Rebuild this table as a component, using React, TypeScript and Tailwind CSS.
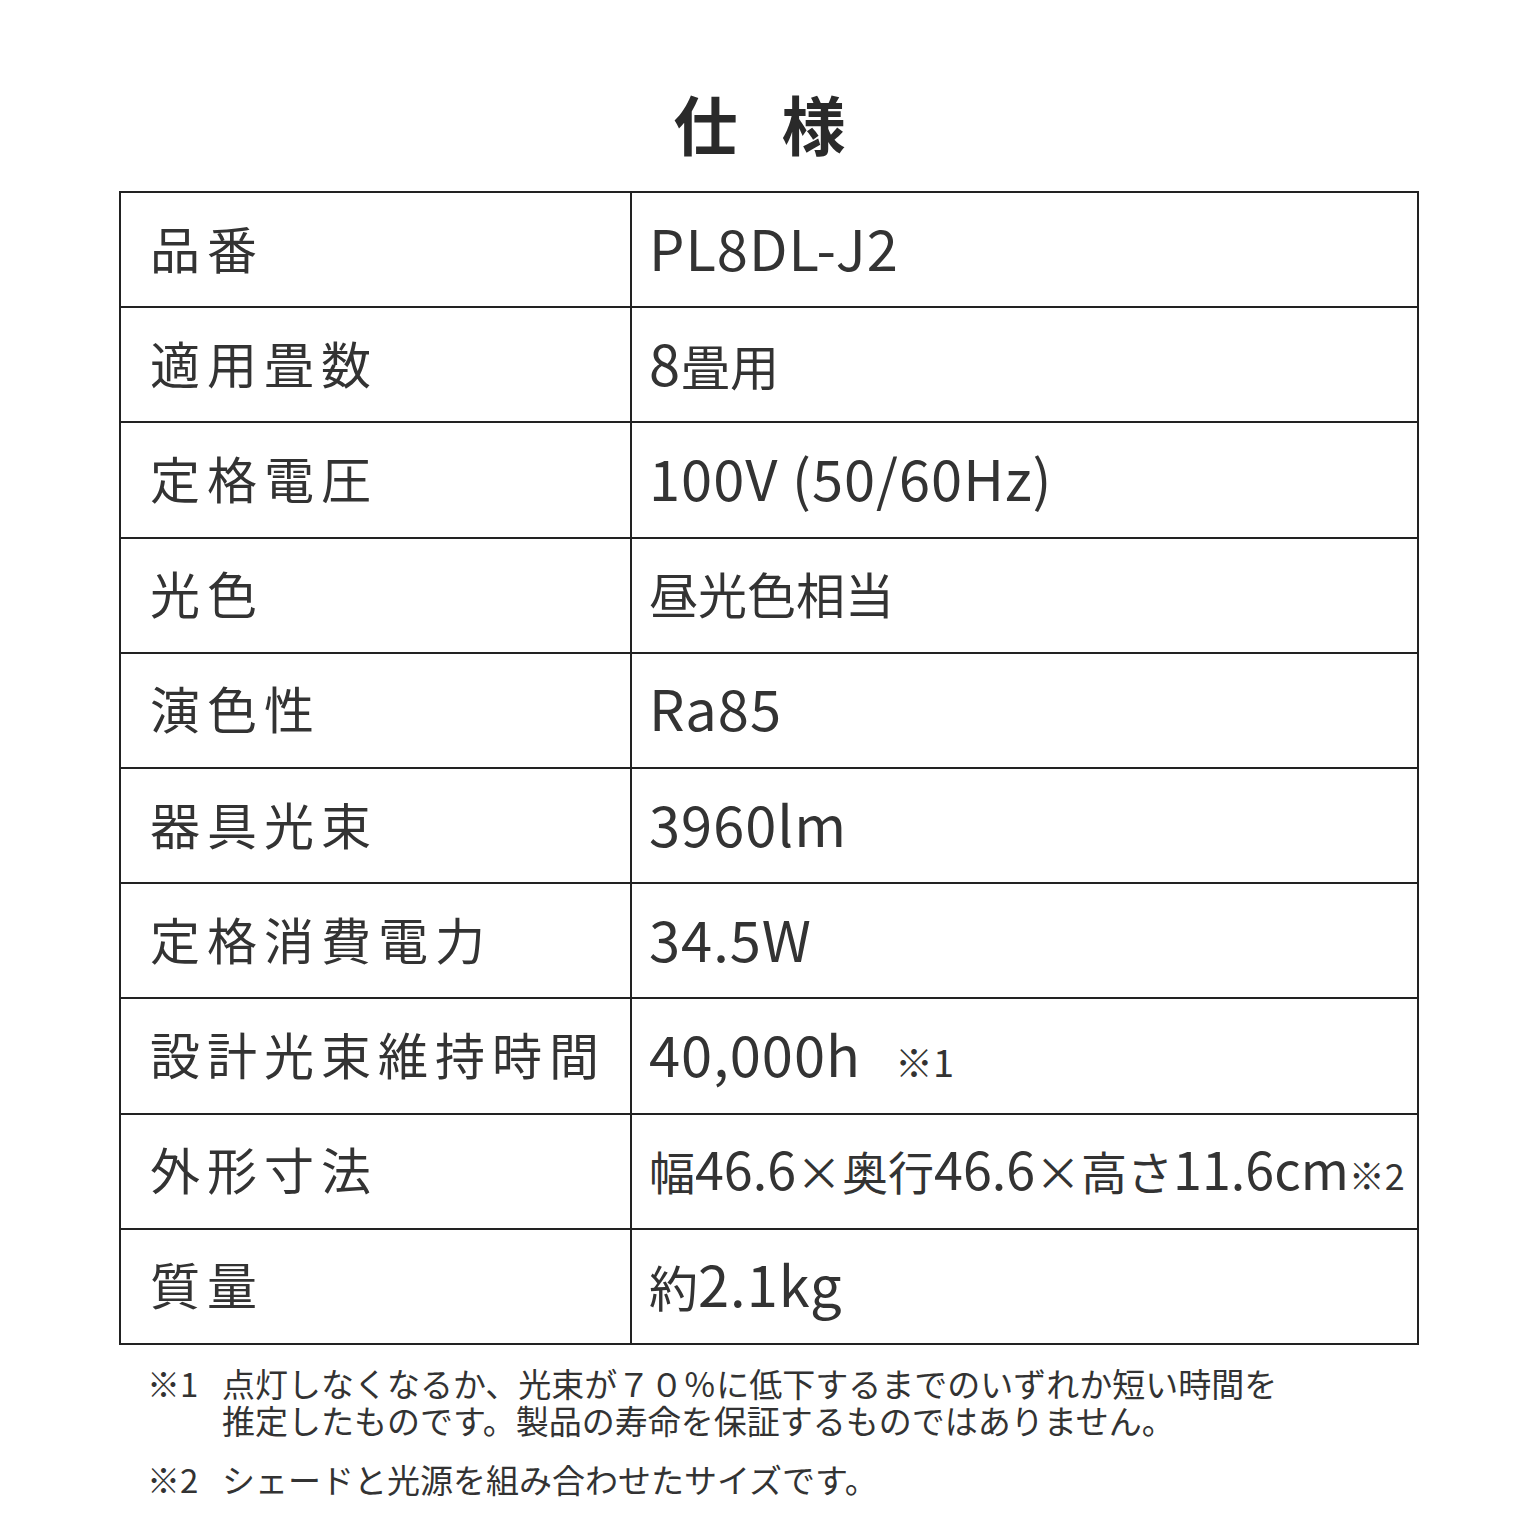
const specs: [string, string, string?][] = [
  ['品番', 'PL8DL-J2'],
  ['適用畳数', '8畳用'],
  ['定格電圧', '100V (50/60Hz)'],
  ['光色', '昼光色相当'],
  ['演色性', 'Ra85'],
  ['器具光束', '3960lm'],
  ['定格消費電力', '34.5W'],
  ['設計光束維持時間', '40,000h', '※1'],
  ['外形寸法', '幅46.6×奥行46.6×高さ11.6cm', '※2'],
  ['質量', '約2.1kg'],
];

// split a value into CJK / latin runs so each gets its own size
function runs(text: string) {
  return text.match(/[\u3040-\u30ff\u3400-\u9fff×]+|[^\u3040-\u30ff\u3400-\u9fff×]+/g) ?? [];
}

function Value({ text, note, tight }: { text: string; note?: string; tight?: boolean }) {
  return (
    <span>
      {runs(text).map((r, i) =>
        /[\u3040-\u30ff\u3400-\u9fff×]/.test(r) ? (
          <span key={i} className={tight ? 'text-[46px]' : 'text-[49px]'}>
            {r}
          </span>
        ) : (
          <span key={i} className={tight ? 'text-[52px]' : 'text-[56px] tracking-[1px]'}>
            {r}
          </span>
        ),
      )}
      {note && (
        <span className={tight ? 'text-[36px]' : 'ml-[34px] text-[38px]'}>{note}</span>
      )}
    </span>
  );
}

export default function App() {
  return (
    <div
      className="w-[1536px] h-[1536px] bg-white text-[#333333]"
      style={{ fontFamily: '"Noto Sans CJK JP", "Noto Sans", sans-serif' }}
    >
      {/* Title */}
      <div className="pt-[90px] pr-[17px] flex justify-center gap-[44px] text-[64px] font-bold leading-none text-[#2a2a2a]">
        <span>仕</span>
        <span>様</span>
      </div>

      {/* Spec table */}
      <div className="mt-[37px] ml-[119px] w-[1300px] border-t-2 border-x-2 border-[#222222]">
        {specs.map(([label, value, note]) => (
          <div key={label} className="flex h-[115.2px] border-b-2 border-[#222222]">
            <div className="w-[511px] shrink-0 border-r-2 border-[#222222] flex items-center pl-[29px] pb-[6px] text-[50px] tracking-[7px] leading-none">
              {label}
            </div>
            <div className="flex-1 flex items-center pl-[17px] pb-[6px] leading-none whitespace-nowrap">
              <Value text={value} note={note} tight={label === '外形寸法'} />
            </div>
          </div>
        ))}
      </div>

      {/* Notes */}
      <div className="ml-[147px] mt-[20px] text-[33px] leading-[37px] text-[#333333]">
        <div className="flex">
          <span className="w-[75px] shrink-0">※1</span>
          <span>
            点灯しなくなるか、光束が７０％に低下するまでのいずれか短い時間を
            <br />
            推定したものです。製品の寿命を保証するものではありません。
          </span>
        </div>
        <div className="flex mt-[22px]">
          <span className="w-[75px] shrink-0">※2</span>
          <span>シェードと光源を組み合わせたサイズです。</span>
        </div>
      </div>
    </div>
  );
}
